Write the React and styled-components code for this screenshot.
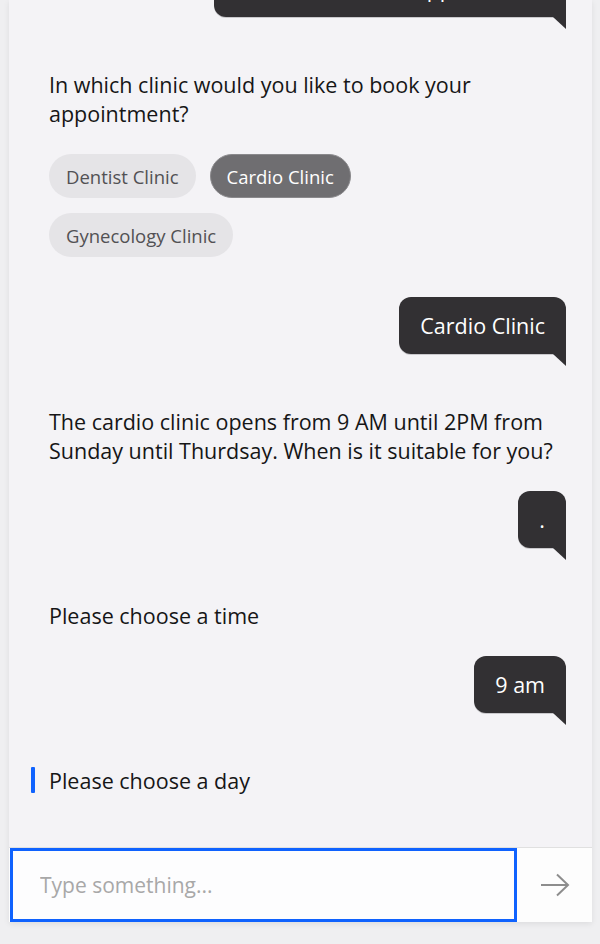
import React from 'react'
import styled, { createGlobalStyle, css } from 'styled-components'

const Global = createGlobalStyle`
  html, body {
    margin: 0;
    padding: 0;
    background: #efeff1;
    font-family: "Open Sans", Roboto, sans-serif;
    color: #161616;
  }
  * { box-sizing: border-box; }
`

const Page = styled.div`
  height: 944px;
  padding: 0 8px 22px 9px;
  display: flex;
`

const Panel = styled.div`
  flex: 1;
  display: flex;
  flex-direction: column;
  background: #f4f3f6;
  box-shadow: 0 2px 6px rgba(0, 0, 0, 0.08);
`

const Messages = styled.div`
  flex: 1;
  overflow: hidden;
  display: flex;
  flex-direction: column;
  justify-content: flex-end;
  padding: 0 26px 52px 40px;
  border-bottom: 1px solid #e0e0e0;
`

const UserRow = styled.div`
  display: flex;
  justify-content: flex-end;
  margin-top: ${p => p.$top || 26}px;
  margin-bottom: 53px;
`

const Bubble = styled.div`
  position: relative;
  background: #323033;
  color: #fff;
  font-size: 21.5px;
  line-height: 29px;
  padding: 14px 21px;
  border-radius: 12px 12px 0 12px;
  box-shadow: 0 1px 0 #c9c8cc;

  &::after {
    content: '';
    position: absolute;
    right: 0;
    top: 100%;
    width: 13px;
    height: 12px;
    background: #323033;
    clip-path: polygon(0 0, 100% 0, 100% 100%);
  }
`

const BotText = styled.div`
  position: relative;
  max-width: 510px;
  font-size: 21.5px;
  line-height: 29px;
  color: #161616;

  ${p => p.$active && css`
    &::before {
      content: '';
      position: absolute;
      left: -18px;
      top: 1px;
      bottom: 2px;
      width: 4px;
      border-radius: 1px;
      background: #0f62fe;
    }
  `}
`

const Chips = styled.div`
  display: flex;
  flex-wrap: wrap;
  max-width: 460px;
  gap: 15px 14px;
  margin-top: 26px;
`

const Chip = styled.div`
  height: 44px;
  display: flex;
  align-items: center;
  padding: 0 16px;
  border-radius: 22px;
  font-size: 18.5px;
  background: ${p => (p.$selected ? '#6f6e71' : '#e5e4e7')};
  color: ${p => (p.$selected ? '#ffffff' : '#525154')};
  border: 1px solid ${p => (p.$selected ? '#8a898c' : 'transparent')};
`

const InputRow = styled.div`
  height: 74px;
  display: flex;
  background: #fdfdfd;
`

const Field = styled.input`
  flex: 1;
  height: 74px;
  margin-left: 1px;
  border: 3px solid #0f62fe;
  background: #fdfdfe;
  padding: 0 0 0 27px;
  font-family: "Open Sans", Roboto, sans-serif;
  font-size: 21px;
  color: #161616;
  outline: none;

  &::placeholder {
    color: #a8a8a8;
  }
`

const Send = styled.button`
  width: 75px;
  border: none;
  background: #fdfdfd;
  display: flex;
  align-items: center;
  justify-content: center;
  padding: 0;
  color: #8d8d8d;
`

function ArrowIcon() {
  return (
    <svg width="30" height="24" viewBox="0 0 30 24" fill="none" stroke="currentColor" strokeWidth="2">
      <path d="M1 12 H28" />
      <path d="M17 1.5 L28 12 L17 22.5" />
    </svg>
  )
}

export default function App() {
  return (
    <>
      <Global />
      <Page>
        <Panel>
          <Messages>
            <UserRow>
              <Bubble>I want to book an appointment</Bubble>
            </UserRow>

            <BotText>In which clinic would you like to book your appointment?</BotText>
            <Chips>
              <Chip>Dentist Clinic</Chip>
              <Chip $selected>Cardio Clinic</Chip>
              <Chip>Gynecology Clinic</Chip>
            </Chips>

            <UserRow $top={40}>
              <Bubble>Cardio Clinic</Bubble>
            </UserRow>

            <BotText>
              The cardio clinic opens from 9 AM until 2PM from Sunday until Thurdsay. When is it suitable for you?
            </BotText>

            <UserRow>
              <Bubble>.</Bubble>
            </UserRow>

            <BotText>Please choose a time</BotText>

            <UserRow>
              <Bubble>9 am</Bubble>
            </UserRow>

            <BotText $active>Please choose a day</BotText>
          </Messages>

          <InputRow>
            <Field placeholder="Type something..." />
            <Send aria-label="Send">
              <ArrowIcon />
            </Send>
          </InputRow>
        </Panel>
      </Page>
    </>
  )
}
